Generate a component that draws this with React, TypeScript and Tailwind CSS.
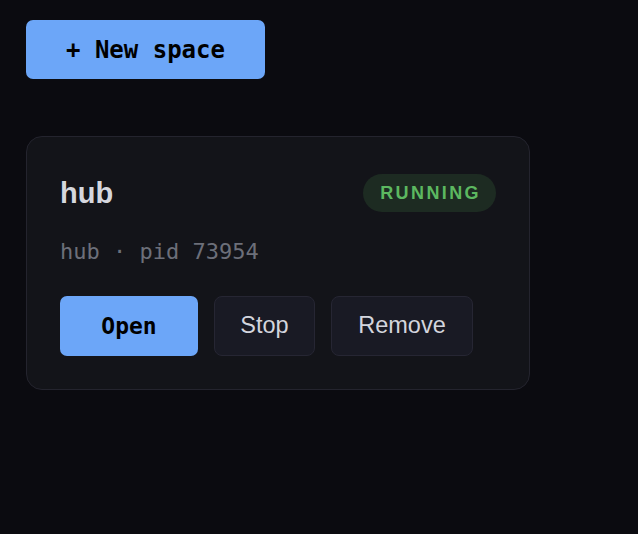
import React from "react";

const mono = "font-['DejaVu_Sans_Mono',monospace]";
const sans = "font-['Liberation_Sans',Arial,sans-serif]";

interface Space {
  name: string;
  kind: string;
  pid: number;
  status: string;
}

const spaces: Space[] = [{ name: "hub", kind: "hub", pid: 73954, status: "RUNNING" }];

const SpaceCard: React.FC<{ space: Space }> = ({ space }) => {
  return (
    <div className="w-[504px] rounded-[16px] border border-[#24242e] bg-[#131419] px-[33px] py-[33px]">
      <div className="flex h-[46px] items-center justify-between">
        <h2 className={`${sans} text-[29px] font-bold leading-none text-[#d5d7de]`}>{space.name}</h2>
        <span
          className={`${sans} flex h-[38px] items-center rounded-full bg-[#1d2b22] pl-[17px] pr-[15px] text-[18px] font-bold tracking-[2.4px] text-[#5cb860]`}
        >
          {space.status}
        </span>
      </div>
      <div className={`${mono} mt-[19px] text-[22px] leading-[33px] text-[#6c6f79]`}>
        {space.kind} · pid {space.pid}
      </div>
      <div className="mt-[28px] flex gap-[16px]">
        <button
          className={`${mono} flex h-[60px] w-[138px] items-center justify-center rounded-[7px] bg-[#6ca6f8] text-[23px] font-bold text-black`}
        >
          Open
        </button>
        <button
          className={`${sans} flex h-[60px] w-[101px] items-center justify-center rounded-[8px] border border-[#262633] bg-[#191a24] text-[23.5px] text-[#d3d5dd]`}
        >
          Stop
        </button>
        <button
          className={`${sans} flex h-[60px] w-[142px] items-center justify-center rounded-[8px] border border-[#262633] bg-[#191a24] text-[23.5px] text-[#d3d5dd]`}
        >
          Remove
        </button>
      </div>
    </div>
  );
};

export default function App() {
  return (
    <div className="min-h-[534px] w-full bg-[#0b0b10] pl-[26px] pt-[20px]">
      <button
        className={`${mono} flex h-[59px] w-[239px] items-center justify-center rounded-[7px] bg-[#6ca6f8] text-[24px] font-bold text-black`}
      >
        + New space
      </button>
      <div className="mt-[57px] flex flex-col gap-4">
        {spaces.map((s) => (
          <SpaceCard key={s.name} space={s} />
        ))}
      </div>
    </div>
  );
}
